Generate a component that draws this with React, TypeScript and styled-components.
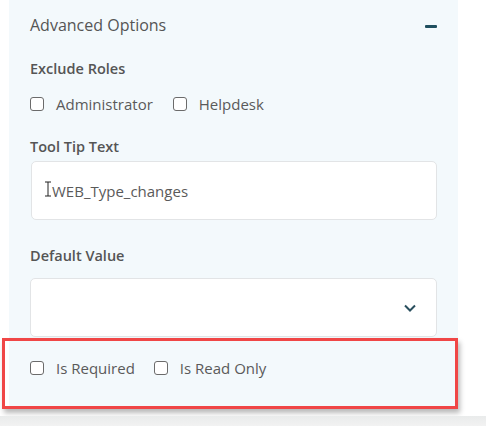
import React from "react";
import styled, { createGlobalStyle } from "styled-components";

const GlobalStyle = createGlobalStyle`
  html, body {
    margin: 0;
    padding: 0;
    background: #ffffff;
  }
  body {
    font-family: "Open Sans", "Noto Sans", sans-serif;
    color: #555555;
  }
`;

const Page = styled.div`
  width: 486px;
  height: 426px;
  overflow: hidden;
  display: flex;
  flex-direction: column;
`;

const Panel = styled.div`
  margin-left: 9px;
  width: 449px;
  box-sizing: border-box;
  padding: 14px 21px 0 21px;
  background: #f3f9fc;
  display: flex;
  flex-direction: column;
`;

const Header = styled.div`
  display: flex;
  align-items: center;
  justify-content: space-between;
  height: 22px;
  padding-right: 0;
`;

const Title = styled.div`
  font-size: 16px;
  line-height: 22px;
  color: #555555;
`;

const Minus = styled.span`
  display: block;
  width: 12px;
  height: 3px;
  margin-top: 2px;
  background: #1f4f5f;
  border-radius: 1px;
`;

const Label = styled.div<{ $top: number }>`
  margin-top: ${(p) => p.$top}px;
  font-size: 14.5px;
  line-height: 20px;
  font-weight: 600;
  color: #555555;
`;

const CheckRow = styled.div<{ $top: number }>`
  margin-top: ${(p) => p.$top}px;
  display: flex;
  align-items: center;
  height: 20px;
`;

const CheckItem = styled.label<{ $gap: number }>`
  display: flex;
  align-items: center;
  margin-right: ${(p) => p.$gap}px;
  font-size: 15px;
  line-height: 20px;
  color: #5a5a5a;
`;

const Box = styled.span`
  display: block;
  width: 14px;
  height: 14px;
  box-sizing: border-box;
  border: 1.5px solid #6b6b6b;
  border-radius: 3px;
  background: #ffffff;
  margin-right: 12px;
`;

const Field = styled.div<{ $top: number }>`
  margin-top: ${(p) => p.$top}px;
  margin-left: 1px;
  width: 406px;
  height: 59px;
  box-sizing: border-box;
  background: #ffffff;
  border: 1px solid #e2e4e6;
  border-radius: 5px;
  display: flex;
  align-items: center;
  padding: 0 20px 0 12px;
  font-size: 15px;
  color: #5a5a5a;
`;

const SelectField = styled(Field)`
  margin-left: 0;
  width: 407px;
  justify-content: flex-end;
`;

const Cursor = styled.svg`
  display: block;
  margin-top: -4px;
  margin-right: 0;
`;

const Highlight = styled.div`
  margin-left: -28px;
  margin-top: 1px;
  width: 456px;
  height: 71px;
  box-sizing: border-box;
  border: 3px solid #f04646;
  padding: 0 0 0 25px;
  display: flex;
  align-items: flex-start;
  padding-top: 17px;
  box-shadow: 2px 4px 5px rgba(0, 0, 0, 0.28);
`;

const Footer = styled.div`
  margin-top: auto;
  height: 10px;
  background: linear-gradient(#e9ebeb, #f2f2f2);
`;

type Opt = { label: string; gap: number };

const Checks: React.FC<{ items: Opt[]; top: number }> = ({ items, top }) => (
  <CheckRow $top={top}>
    {items.map((o) => (
      <CheckItem key={o.label} $gap={o.gap}>
        <Box />
        {o.label}
      </CheckItem>
    ))}
  </CheckRow>
);

const App: React.FC = () => {
  return (
    <Page>
      <GlobalStyle />
      <Panel>
        <Header>
          <Title>Advanced Options</Title>
          <Minus />
        </Header>
        <Label $top={23}>Exclude Roles</Label>
        <Checks
          top={15}
          items={[
            { label: "Administrator", gap: 20 },
            { label: "Helpdesk", gap: 0 },
          ]}
        />
        <Label $top={23}>Tool Tip Text</Label>
        <Field $top={4}>
          <Cursor width="8" height="16" viewBox="0 0 8 16">
            <path d="M1 1h6M4 1v14M1 15h6" stroke="#222" strokeWidth="1" fill="none" />
          </Cursor>
          WEB_Type_changes
        </Field>
        <Label $top={26}>Default Value</Label>
        <SelectField $top={12}>
          <svg width="12" height="8" viewBox="0 0 12 8">
            <path d="M1 1.5l5 5 5-5" stroke="#2a4f5e" strokeWidth="2" fill="none" />
          </svg>
        </SelectField>
        <Highlight>
          <Checks
            top={0}
            items={[
              { label: "Is Required", gap: 19 },
              { label: "Is Read Only", gap: 0 },
            ]}
          />
        </Highlight>
      </Panel>
      <Footer />
    </Page>
  );
};

export default App;
